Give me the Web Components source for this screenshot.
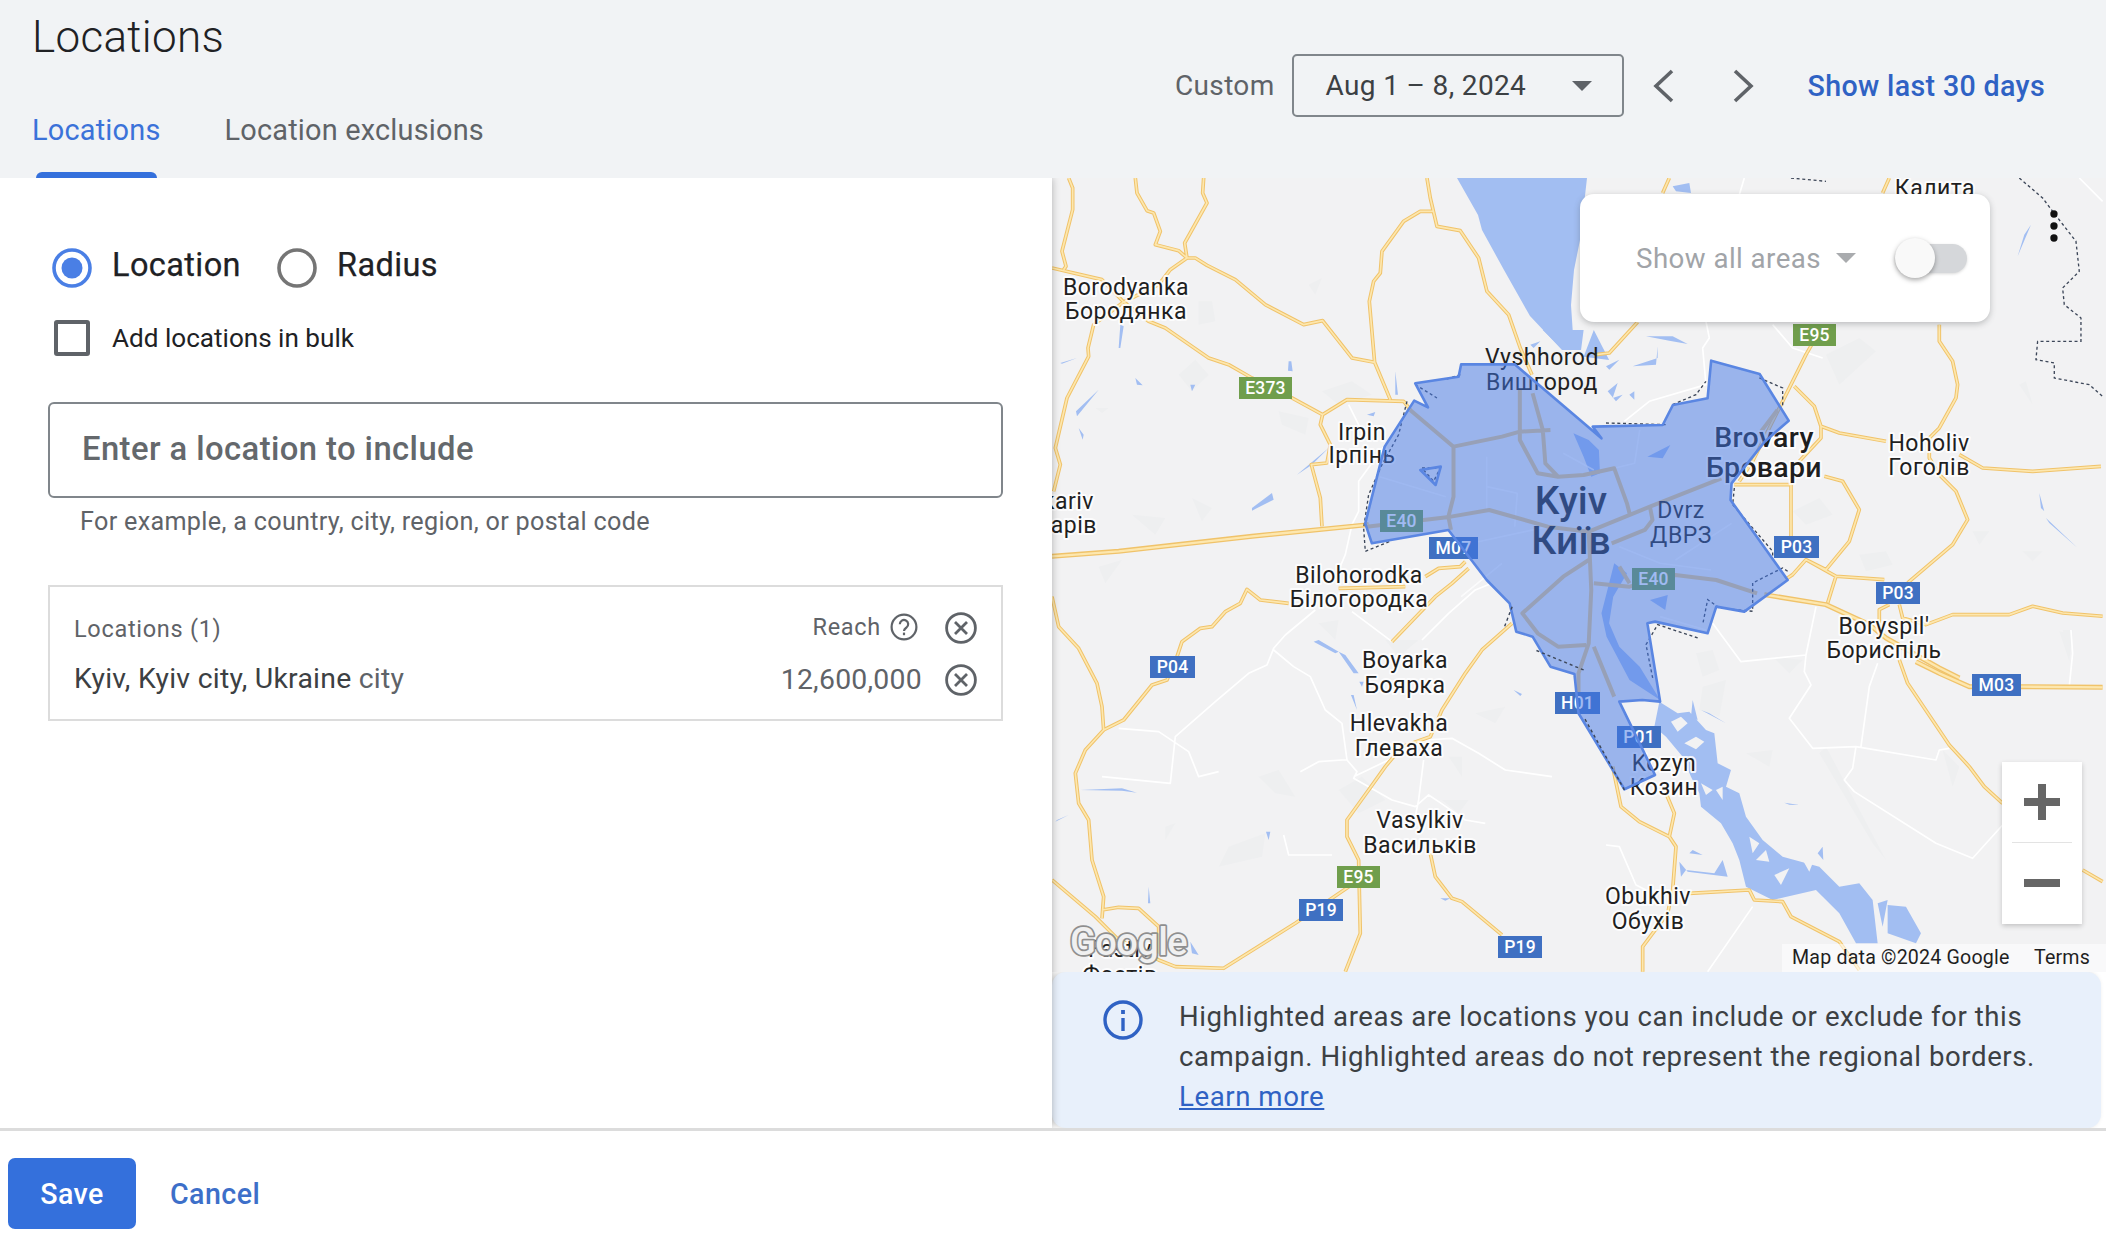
<!DOCTYPE html>
<html>
<head>
<meta charset="utf-8">
<title>Locations</title>
<style>
  html, body { margin: 0; height: 100%; background: #fff; overflow: hidden; }
  body { font-family: Roboto, "Noto Sans", sans-serif; color: #202124; }
</style>
</head>
<body>
<locations-page>
  <date-range slot="range" label="Custom" value="Aug 1 – 8, 2024" link="Show last 30 days"></date-range>
  <section slot="form">
    <radio-group></radio-group>
    <check-row>Add locations in bulk</check-row>
    <location-input placeholder="Enter a location to include" hint="For example, a country, city, region, or postal code"></location-input>
    <location-list></location-list>
  </section>
  <map-view slot="map">
    <area-card></area-card>
    <zoom-control></zoom-control>
  </map-view>
  <info-banner slot="banner">Highlighted areas are locations you can include or exclude for this<br>campaign. Highlighted areas do not represent the regional borders.<br><a>Learn more</a></info-banner>
  <action-bar slot="actions"></action-bar>
</locations-page>

<script>
'use strict';
const X_ICON = `<svg width="32" height="32" viewBox="0 0 32 32" fill="none" stroke="#5f6368" stroke-width="2.8"><circle cx="16" cy="16" r="14.4"/><path d="M10 10l12 12M22 10L10 22"/></svg>`;

class LocationsPage extends HTMLElement {
  constructor() {
    super();
    this.attachShadow({mode: 'open'}).innerHTML = `
    <style>
      :host { display: grid; width: 2106px; height: 1246px; grid-template-columns: 1052px 1054px; grid-template-rows: 178px 950px 118px; }
      header { grid-column: 1 / 3; background: #f1f3f5; display: flex; justify-content: space-between; }
      .head-left { display: flex; flex-direction: column; padding-left: 32px; }
      h1 { margin: 12px 0 0; font: 300 44px/50px Roboto, sans-serif; color: #202124; letter-spacing: .3px; }
      .tabs { display: flex; gap: 64px; margin-top: 51px; font: 400 28.9px/34px Roboto, sans-serif; color: #5f6368; position: relative; letter-spacing: .2px; }
      .tabs b { font-weight: 400; color: #3b72d9; position: relative; padding-bottom: 31px; }
      .tabs b::after { content: ''; position: absolute; left: 4px; right: 4px; bottom: 0; height: 6px; background: #3470dc; border-radius: 6px 6px 0 0; }
      .form { background: #fff; box-shadow: 0 0 8px rgba(0,0,0,.28); position: relative; z-index: 1; clip-path: inset(0 -12px 0 0); }
      .right { display: flex; flex-direction: column; background: #fff; }
      .foot { grid-column: 1 / 3; background: #fff; border-top: 3px solid #dcdcdc; }
    </style>
    <header>
      <div class="head-left">
        <h1>Locations</h1>
        <div class="tabs"><b>Locations</b><span>Location exclusions</span></div>
      </div>
      <slot name="range"></slot>
    </header>
    <div class="form"><slot name="form"></slot></div>
    <div class="right"><slot name="map"></slot><slot name="banner"></slot></div>
    <div class="foot"><slot name="actions"></slot></div>`;
  }
}
customElements.define('locations-page', LocationsPage);

class DateRange extends HTMLElement {
  constructor() {
    super();
    this.attachShadow({mode: 'open'}).innerHTML = `
    <style>
      :host { display: flex; align-items: center; height: 63px; margin: 54px 61px 0 0; font: 400 28px/34px Roboto, sans-serif; color: #5f6368; letter-spacing: .35px; }
      .select { display: flex; align-items: center; justify-content: space-between; box-sizing: border-box; width: 332px; height: 63px; margin-left: 17px; padding: 0 32px; border: 2px solid #80868b; border-radius: 5px; color: #3c4043; }
      i { width: 0; height: 0; border: 10px solid transparent; border-top: 10px solid #5f6368; border-bottom: 0; margin-right: -2px; }
      svg { display: block; }
      .nav { display: flex; gap: 59px; margin: 0 54px 0 29px; }
      a { color: #2f62c4; font-weight: 500; font-size: 28.6px; letter-spacing: .35px; }
    </style>
    <span>${this.getAttribute('label')}</span>
    <div class="select"><span>${this.getAttribute('value')}</span><i></i></div>
    <div class="nav">
      <svg width="21" height="34" viewBox="0 0 21 34" fill="none" stroke="#5f6368" stroke-width="3.6"><path d="M19 2L3 17l16 15"/></svg>
      <svg width="21" height="34" viewBox="0 0 21 34" fill="none" stroke="#5f6368" stroke-width="3.6"><path d="M2 2l16 15L2 32"/></svg>
    </div>
    <a>${this.getAttribute('link')}</a>`;
  }
}
customElements.define('date-range', DateRange);

class RadioGroup extends HTMLElement {
  constructor() {
    super();
    this.attachShadow({mode: 'open'}).innerHTML = `
    <style>
      :host { display: flex; align-items: center; height: 40px; margin: 70px 0 0 52px; font: 400 32.5px/40px Roboto, sans-serif; color: #202124; letter-spacing: .4px; }
      span { margin: -6px 0 0 20px; -webkit-text-stroke: .25px #202124; }
      svg { display: block; flex: none; }
      .second { margin-left: 36px; }
    </style>
    <svg width="40" height="40" viewBox="0 0 40 40"><circle cx="20" cy="20" r="18" fill="none" stroke="#4a7fe5" stroke-width="3.6"/><circle cx="20" cy="20" r="10.5" fill="#4a7fe5"/></svg>
    <span>Location</span>
    <svg class="second" width="40" height="40" viewBox="0 0 40 40"><circle cx="20" cy="20" r="18" fill="none" stroke="#757575" stroke-width="3.6"/></svg>
    <span>Radius</span>`;
  }
}
customElements.define('radio-group', RadioGroup);

class CheckRow extends HTMLElement {
  constructor() {
    super();
    this.attachShadow({mode: 'open'}).innerHTML = `
    <style>
      :host { display: flex; align-items: center; gap: 22px; height: 36px; margin: 32px 0 0 54px; font: 400 26.1px/36px Roboto, sans-serif; color: #202124; }
      i { display: block; box-sizing: border-box; width: 36px; height: 36px; border: 4px solid #5f6368; border-radius: 3px; }
    </style>
    <i></i><span><slot></slot></span>`;
  }
}
customElements.define('check-row', CheckRow);

class LocationInput extends HTMLElement {
  constructor() {
    super();
    this.attachShadow({mode: 'open'}).innerHTML = `
    <style>
      :host { display: block; margin: 46px 49px 0 48px; }
      .field { box-sizing: border-box; height: 96px; padding: 0 32px 2px; border: 2.5px solid #80868b; border-radius: 6px; display: flex; align-items: center; font: 500 32.8px/40px Roboto, sans-serif; color: #64686c; letter-spacing: .42px; }
      p { margin: 11px 0 0 32px; font: 400 25.2px/26px Roboto, sans-serif; color: #5f6368; letter-spacing: .3px; }
    </style>
    <div class="field">${this.getAttribute('placeholder')}</div>
    <p>${this.getAttribute('hint')}</p>`;
  }
}
customElements.define('location-input', LocationInput);

class LocationList extends HTMLElement {
  constructor() {
    super();
    this.attachShadow({mode: 'open'}).innerHTML = `
    <style>
      :host { display: block; box-sizing: border-box; height: 136px; margin: 50px 49px 0 48px; padding: 23px 24px 0 24px; border: 2.5px solid #dcdcdc; font: 400 23.5px/36px Roboto, sans-serif; color: #5f6368; letter-spacing: .7px; }
      .row { display: flex; align-items: center; justify-content: space-between; height: 36px; }
      .row + .row { margin-top: 16px; font-size: 28.4px; letter-spacing: .25px; }
      .end { display: flex; align-items: center; }
      .up { margin-top: -3px; }
      .dark { color: #3c4043; }
      .first { margin-top: 2px; }
      svg { display: block; }
      .help { margin: -2px 27px 0 9px; }
    </style>
    <div class="row">
      <span class="first">Locations (1)</span>
      <div class="end"><span class="up">Reach</span>
        <svg class="help" width="28" height="28" viewBox="0 0 28 28" fill="none" stroke="#5f6368" stroke-width="2.2"><circle cx="14" cy="14" r="12.4"/><path d="M9.8 11.2a4.2 4.2 0 1 1 6.6 3.4c-1.4 1-2.4 1.6-2.4 3.4"/><path d="M14 19.6v2.6"/></svg>
        ${X_ICON}</div>
    </div>
    <div class="row">
      <span class="up"><span class="dark">Kyiv, Kyiv city, Ukraine</span> city</span>
      <div class="end"><span style="margin-right:23px">12,600,000</span>${X_ICON}</div>
    </div>`;
  }
}
customElements.define('location-list', LocationList);

class MapView extends HTMLElement {
  constructor() {
    super();
    const label = (x, y, t, cls = '') => `<text x="${x}" y="${y}" class="${cls}">${t}</text>`;
    const shield = (x, y, w, t, c) => `<g><rect x="${x}" y="${y}" width="${w}" height="22" fill="${c}"/><text class="sh" x="${x + w / 2}" y="${y + 17}">${t}</text></g>`;
    const G = '#709e4c', B = '#3f70c2';
    this.attachShadow({mode: 'open'}).innerHTML = `
    <style>
      :host { display: block; position: relative; width: 1054px; height: 794px; flex: none; overflow: hidden; background: #f2f2f3; }
      svg { display: block; position: absolute; left: 0; top: 0; }
      text { font-family: Roboto, sans-serif; font-size: 23px; fill: #1f1f1f; text-anchor: middle; letter-spacing: .5px; paint-order: stroke; stroke: #fff; stroke-width: 4px; stroke-opacity: .85; stroke-linejoin: round; }
      text.plain { stroke: none; }
      text.end { text-anchor: end; }
      text.city { font-size: 28.5px; font-weight: 500; letter-spacing: .3px; }
      text.big { font-size: 39px; font-weight: 500; stroke: none; letter-spacing: 0; }
      text.sh { font-size: 17.5px; font-weight: 500; fill: #fff; stroke: none; letter-spacing: .2px; }
      text.small { font-size: 19.6px; text-anchor: start; stroke: none; letter-spacing: .2px; }
      text.logo { font-size: 38px; font-weight: 500; letter-spacing: -.6px; text-anchor: start; fill: #f0f0f0; stroke: #8f8f8f; stroke-width: 3.4px; stroke-opacity: 1; }
      .water { fill: #a2bef2; }
      .blob { fill: #eeeff0; }
      .minor { fill: none; stroke: #fff; stroke-width: 5; stroke-linejoin: round; }
      .a { transform: translate(1052px,178px) scale(.3333); }
      .b { transform: translate(1606px,178px) scale(.3333); }
      .c { transform: translate(1606px,560px) scale(.3333); }
      .d { transform: translate(1052px,560px) scale(.3333); }
      .e { transform: translate(1053px,330px) scale(.5102,.3333); }
      .e * { vector-effect: non-scaling-stroke; }
      .hw { fill: none; stroke: #eccb88; stroke-width: 4; stroke-linejoin: round; }
      .lite { fill: none; stroke: #fff; stroke-width: 1.6; stroke-linejoin: round; opacity: .75; }
      .dash { fill: none; stroke: #3c4658; stroke-width: 4; stroke-dasharray: 9 8; }
      .dash2 { fill: none; stroke: #3c4658; stroke-width: 1.4; stroke-dasharray: 3 3; }
      .area { fill: rgba(66,118,230,.5); stroke: #5a86e2; stroke-width: 2.6; stroke-linejoin: round; }
      .clear { fill: #f2f2f3; }
      .attr { position: absolute; bottom: 0; right: 0; height: 28px; width: 324px; background: rgba(255,255,255,.55); }
    </style>
    <svg width="1054" height="794" viewBox="1052 178 1054 794">
      <defs>
        <g id="yellow" fill="none" stroke-linejoin="round">
          <g class="a"><path d="M50,0L62,30L62,95L30,220L42,265L35,275M0,270L150,305L215,372L290,430L340,450L470,540L530,560L600,600L720,660L812,710M250,0L255,45L285,98L305,105L325,160L310,200L380,218L405,240L430,240L465,262L550,305L640,380L755,440L812,428L900,540L968,553M455,0L452,45L465,75L398,195L405,240L355,275L320,320L215,372L125,440L108,510L110,535L45,660L10,810L25,860L5,940M1125,0L1135,60L1155,145L1225,158L1280,240L1305,340L1370,410L1405,510L1440,590M1145,100L1105,100L1055,130L990,220L985,285L965,310L952,370L968,553L1015,665M812,710L885,665L1055,670L1075,695M812,710L805,740L835,800L825,855L778,860L805,960L810,1045"/></g>
          <g class="d"><path d="M0,110L20,200L80,265L135,370L150,440L155,510L100,570L70,640L80,730L110,780L120,900L155,1010L150,1075M155,510L215,480L300,375L345,360L375,290L390,245L445,205L480,200L520,155L565,130L585,88L625,120L710,130M860,85L1060,80M1120,50L1160,25L1225,20L1240,5M1020,245L1150,110L1200,70L1250,25M1380,190L1290,270L1240,340L1170,450L1135,530L1050,560L1000,620L950,690L885,780L885,830L920,900L925,1120L880,1235M0,960L130,1070L195,1135L320,1200L370,1220L515,1225L730,1090L920,960M150,1050L200,1042L260,1045L320,1100L320,1180M1135,880L1150,950L1200,1015L1230,1025L1350,1125"/></g>
          <g class="b"><path d="M850,0L830,45M190,0L170,45M95,432L10,525L-30,530M640,460L600,530L510,710L440,850L400,910M565,625L625,685L645,745L645,780L580,850M645,745L700,765L840,790M1000,440L1000,490L1040,550L1055,620L1050,660L1000,750L970,780L970,840L1000,890L1050,940L1085,1025L1040,1100L905,1215M1060,830L1130,870L1280,880L1485,865M385,920L555,920L555,1090M655,895L710,910L760,995L730,1090L660,1175L600,1145L560,1190L545,1200M600,1145L690,1195L835,1205M690,1195L665,1275M820,1380L820,1295L850,1280M880,1280L890,1320L960,1340L1040,1310L1210,1310L1280,1285L1370,1305L1490,1315"/></g>
          <g class="c"><path d="M880,300L905,370L1030,555L1090,620L1135,680L1190,730M1430,930L1490,965M20,620L45,740L100,785L190,830L210,860L200,990L185,1060L110,1160L110,1235M180,700L205,760L190,830M250,1000L430,990L445,1020L530,1025L555,1070L700,1145L760,1230"/></g>
        </g>
        <g id="motor" fill="none" stroke-linejoin="round">
          <g class="a"><path d="M0,1135L200,1120L600,1075L950,1040"/></g>
          <g class="b"><path d="M475,1250L660,1280L790,1340L840,1380L1000,1470L1060,1500"/></g>
          <g class="c"><path d="M930,305L1000,340L1090,380L1250,380L1490,382"/></g>
        </g>
      </defs>

      <!-- land patches -->
      <g class="a blob"><path d="M380,590L430,545L470,590L420,640ZM810,640L900,610L960,650L860,680ZM440,370L480,370L490,430L440,440ZM680,700L770,720L760,770L690,740ZM770,320L810,300L790,350ZM420,960L480,990L450,1030ZM240,1010L340,1020L310,1070ZM130,690L170,690L150,705Z"/></g>
      <g class="b blob"><path d="M660,530L760,480L810,520L700,620ZM1240,620L1260,610L1280,680ZM560,1000L640,960L680,1010L600,1040ZM1250,1120L1310,1120L1280,1150ZM760,1130L840,1120L860,1160L780,1180ZM1100,1060L1150,1060L1120,1100ZM1360,1360L1400,1370L1390,1450Z"/></g>
      <g class="c blob"><path d="M270,280L320,270L340,330L290,350ZM1010,570L1060,620L1040,680ZM660,560L840,900L800,850L640,580ZM420,580L500,570L490,620ZM290,380L360,360L340,470L280,450ZM1370,210L1400,210L1390,280ZM500,290L590,300L550,340Z"/></g>
      <g class="d blob"><path d="M620,650L680,630L730,710L670,700ZM530,860L640,820L630,890L500,920ZM1000,240L1100,240L1040,290ZM860,690L930,650L1000,720L920,760ZM800,190L860,180L850,240ZM1170,720L1250,720L1220,760ZM1270,460L1360,440L1330,490ZM1190,590L1230,590L1230,650ZM140,20L210,0L160,70ZM340,800L370,790L340,840Z"/></g>

      <!-- water -->
      <path class="water" d="M1457,178L1587,178L1580,240L1574,270L1571,305L1574,350L1562,350L1530,316L1504,270L1482,230L1478,215Z"/>
      <g class="a water"><path d="M600,990L660,945L665,965L600,998ZM710,550L718,550L722,580L708,578ZM250,600L272,622L255,620ZM1030,580L1038,650L1030,650ZM80,750L95,770L92,785ZM205,440L215,445L205,510L200,510ZM25,555L75,540L30,557ZM140,635L75,715L72,700ZM945,710L970,702L965,715ZM735,890L830,810L780,860ZM1435,500L1465,490L1445,510ZM415,620L430,620L420,640Z"/></g>
      <g class="b water"><path d="M1275,140L1235,235L1255,170ZM120,475L200,475L245,498L190,488ZM80,565L155,540L155,505L150,560ZM0,565L40,545L10,575ZM5,640L35,615L20,660L50,650L30,670ZM70,650L85,640L85,665ZM1300,945L1315,1000L1305,990ZM1320,1020L1415,1110L1330,1035ZM200,25L250,15L255,45L210,40Z"/></g>
      <g class="d water"><path d="M785,245L800,240L860,275L850,280ZM860,275L880,285L920,340L905,340ZM897,405L905,405L915,450ZM922,365L935,365L930,380ZM85,690L210,685L255,698L210,692ZM10,785L50,765L15,780ZM290,980L295,1030L288,1030ZM415,1145L440,1185L420,1180ZM1385,390L1410,402L1405,408ZM642,815L655,815L650,840ZM1165,1015L1195,1015L1180,1022Z"/></g>
      <g class="c water"><path d="M160,425L215,460L250,455L300,510L325,520L335,610L375,630L360,680L400,700L420,770L470,840L530,890L640,920L700,980L760,970L800,1020L815,1150L750,1150L700,1060L630,990L500,1020L420,980L400,900L380,850L345,790L285,740L280,700L255,650L230,590L180,530L145,500ZM845,1035L900,1040L945,1120L930,1150L845,1120ZM815,1030L845,1020L830,1100ZM220,905L245,935L365,950L350,900L325,940L240,930L225,950ZM250,880L290,885L260,870ZM535,728L580,735L550,734ZM260,420L275,480L255,470ZM285,450L360,490L310,460ZM635,880L650,860L652,900Z"/></g>
      <g class="c clear"><path d="M430,830L460,850L440,880ZM480,870L490,905L450,900ZM505,945L550,925L525,975ZM195,485L225,470L245,490L215,515ZM235,550L270,530L295,545L270,568ZM330,690L350,680L350,720ZM590,900L620,910L610,935ZM285,670L320,690L300,705Z"/></g>
      <g class="e water"><path d="M1020,310L1050,330L1070,360L1072,430L1055,440L1040,380ZM1100,700L1125,730L1098,800L1090,880L1110,950L1150,1010L1190,1110L1130,1050L1085,920L1075,850ZM1165,380L1210,345L1195,385ZM960,0L1040,0L1035,60L1000,60ZM1170,810L1205,795L1200,840ZM1060,0L1080,60L1090,90L1040,80Z"/></g>

      <!-- minor roads -->
      <g class="d minor"><path d="M790,150L700,225L665,265L645,315L590,340L490,425L370,530L355,670L150,650M200,505L320,515L410,575L440,650L500,635M665,270L725,320L775,350L820,450L870,490L885,600L915,635L905,655L1020,720L1090,740L1130,705L1160,725L1240,780L1300,790M745,635L800,605L870,600L885,600M905,650L1010,600L1120,540L1200,535L1280,580L1360,630L1500,650M1115,600L1100,720L1090,770M900,155L1020,245M1110,240L1190,160L1270,90L1320,70M695,825L710,885L840,885"/></g>
      <g class="c minor"><path d="M320,190L405,305L600,285L595,335L615,375L550,475L620,565L750,560L990,600L1000,570L1030,565M630,140L600,285M815,310L790,380L765,560M750,560L740,625L715,660L745,695L990,850L1100,895L1190,795M1395,210L1400,280L1390,380M440,1040L305,1235M0,855L40,860L90,975L120,990"/></g>
      <g class="b minor"><path d="M1420,0L1490,70M500,440L560,510L650,540M300,430L310,480L290,510L300,620L130,670L55,730M415,0L400,50"/></g>
      <g class="a minor"><path d="M890,680L930,760M1000,800L920,910L920,1000L900,1040L880,1130L850,1200"/></g>

      <!-- main roads -->
      <use href="#yellow" stroke="#f0c36a" stroke-width="11"/>
      <use href="#yellow" stroke="#fde7ae" stroke-width="5"/>
      <use href="#motor" stroke="#f0c36a" stroke-width="15"/>
      <use href="#motor" stroke="#fde7ae" stroke-width="7"/>

      <!-- highways through the city -->
      <g class="e">
        <path class="lite" d="M850,380L850,540M640,440L770,500M850,470L910,490L905,590M820,640L970,590M1000,370L1060,420M1150,300L1140,400L1100,415M1330,580L1220,690M880,700L800,800M1190,860L1280,900M1110,650L1190,700L1290,720"/>
        <path class="hw" d="M700,240L785,350L785,500L775,560L780,600M785,350L880,320L915,305L975,300M915,180L915,330L950,430L990,440L1040,435L1100,415L1125,520L1130,550M940,190L960,300L965,400L990,440M615,590L780,560L855,540L970,590L1050,605L1170,530L1310,445M1420,240L1380,320M1170,530L1175,570L1160,600L1095,640M1050,605L1055,780L1050,940L1030,1030L1030,1150M1060,760L1130,770L1220,735L1300,750L1380,790M1110,710L1130,760M1050,690L1000,740L920,850L950,910L990,950L1045,945M1060,950L1100,1100"/>
      </g>

      <!-- labels -->
      <g>
        ${label(1126,295,'Borodyanka')}${label(1126,319,'Бородянка')}
        ${label(1362,440,'Irpin')}${label(1362,463,'Ірпінь')}
        ${label(1094,509,'kariv','end')}${label(1097,533,'арів','end')}
        ${label(1359,583,'Bilohorodka')}${label(1359,607,'Білогородка')}
        ${label(1405,668,'Boyarka')}${label(1405,693,'Боярка')}
        ${label(1399,731,'Hlevakha')}${label(1399,756,'Глеваха')}
        ${label(1420,828,'Vasylkiv')}${label(1420,853,'Васильків')}
        ${label(1120,957,'Fastiv')}${label(1120,983,'Фастів')}
        ${label(1542,365,'Vyshhorod','plain')}${label(1542,390,'Вишгород','plain')}
        ${label(1764,447,'Brovary','city')}${label(1764,477,'Бровари','city')}
        ${label(1929,451,'Hoholiv')}${label(1929,475,'Гоголів')}
        ${label(1884,634,'Boryspil\'')}${label(1884,658,'Бориспіль')}
        ${label(1935,196,'Калита')}
        ${label(1571,514,'Kyiv','big')}${label(1571,554,'Київ','big')}
        ${label(1681,518,'Dvrz','plain')}${label(1681,543,'ДВРЗ','plain')}
        ${label(1664,771,'Kozyn')}${label(1664,795,'Козин')}
        ${label(1648,904,'Obukhiv')}${label(1648,929,'Обухів')}
      </g>

      <!-- road shields -->
      ${shield(1239,377,53,'E373',G)}${shield(1793,324,43,'E95',G)}${shield(1774,536,45,'P03',B)}
      ${shield(1876,582,44,'P03',B)}${shield(1972,674,49,'M03',B)}${shield(1617,726,44,'P01',B)}
      ${shield(1632,568,43,'E40',G)}${shield(1380,510,43,'E40',G)}${shield(1429,537,49,'M07',B)}
      ${shield(1555,692,45,'H01',B)}${shield(1150,656,45,'P04',B)}${shield(1337,866,43,'E95',G)}
      ${shield(1299,899,44,'P19',B)}${shield(1498,936,44,'P19',B)}

      <!-- regional border, dotted -->
      <g class="b"><path class="dash" d="M555,0L660,10M1240,0L1310,60L1340,100L1410,190L1420,280L1370,330L1375,380L1425,420L1425,490L1295,490L1290,545L1345,555L1345,600L1450,620L1490,655M0,735L180,740M200,680L270,650L300,610M460,600L530,630L530,690M385,930L380,980L500,1120L500,1140M545,1180L530,1170L440,1215L440,1300L340,1290L305,1265L290,1340M275,1380L155,1340L120,1400L140,1500"/></g>
      <g class="a"><path class="dash" d="M1090,620L1155,660M1225,590L1180,605M1065,670L1040,770L990,860L950,950L935,1050L940,1120L1015,1090M1110,870L1165,870L1145,910Z"/></g>
      <g class="b" fill="#111"><circle cx="1344" cy="108" r="11"/><circle cx="1344" cy="144" r="11"/><circle cx="1344" cy="180" r="11"/></g>

      <!-- the selected area -->
      <g class="e">
        <path class="area" d="M1290,92L1385,132L1442,272L1395,335L1330,460L1328,510L1440,750L1355,845L1300,830L1283,910L1180,875L1165,880L1190,1115L1155,1110L1110,1115L1180,1335L1120,1378L1030,1150L1022,1032L975,1010L940,920L908,905L895,820L850,750L775,600L625,640L612,580L650,350L708,212L735,232L710,160L795,140L800,103L905,103L1075,325L1058,290L1195,285L1215,225L1283,205Z"/>
        <path class="area" style="fill:none" d="M720,420L760,410L750,465Z"/>
        <path class="dash2" d="M1120,1380L1040,1160M900,830L885,890M1040,1020L945,960"/>
      </g>

      <text class="logo" x="1070" y="955">Google</text>
    </svg>
    <div class="attr"></div>
    <svg width="1054" height="794" viewBox="1052 178 1054 794" style="pointer-events:none">
      <text class="small" x="1792" y="964">Map data ©2024 Google</text>
      <text class="small" x="2034" y="964">Terms</text>
    </svg>
    <slot></slot>`;
  }
}
customElements.define('map-view', MapView);

class AreaCard extends HTMLElement {
  constructor() {
    super();
    this.attachShadow({mode: 'open'}).innerHTML = `
    <style>
      :host { position: absolute; left: 528px; top: 16px; width: 410px; height: 128px; box-sizing: border-box; display: flex; align-items: center; padding-left: 56px; background: #fff; border-radius: 14px; box-shadow: 0 2px 6px rgba(60,64,67,.3); font: 400 27.7px/34px Roboto, sans-serif; color: #a1a4a8; letter-spacing: .45px; }
      span { margin-top: 2px; }
      i { width: 0; height: 0; border: 10px solid transparent; border-top: 10px solid #a9abae; border-bottom: 0; margin-left: 15px; }
      .toggle { position: relative; width: 72px; height: 29px; margin-left: 39px; border-radius: 15px; background: #d5d7da; box-shadow: 0 1px 3px rgba(0,0,0,.15); }
      .toggle::after { content: ''; position: absolute; left: 0; top: -6px; width: 40px; height: 40px; border-radius: 50%; background: #f9f9f9; box-shadow: 0 2px 5px rgba(0,0,0,.35); }
    </style>
    <span>Show all areas</span><i></i><div class="toggle"></div>`;
  }
}
customElements.define('area-card', AreaCard);

class ZoomControl extends HTMLElement {
  constructor() {
    super();
    this.attachShadow({mode: 'open'}).innerHTML = `
    <style>
      :host { position: absolute; right: 24px; bottom: 48px; width: 80px; height: 162px; display: flex; flex-direction: column; align-items: center; background: #fff; box-shadow: 0 2px 5px rgba(0,0,0,.2); }
      svg { display: block; }
      hr { width: 60px; margin: 0; border: 0; border-top: 1.5px solid #e3e3e3; }
      .plus { margin: 22px 0 22px; }
      .minus { margin: 22px 0 0; }
    </style>
    <svg class="plus" width="36" height="36" viewBox="0 0 36 36" fill="#666"><path d="M14 0h8v14h14v8H22v14h-8V22H0v-8h14z"/></svg>
    <hr>
    <svg class="minus" width="36" height="36" viewBox="0 0 36 36" fill="#666"><path d="M0 14h36v8H0z"/></svg>`;
  }
}
customElements.define('zoom-control', ZoomControl);

class InfoBanner extends HTMLElement {
  constructor() {
    super();
    this.attachShadow({mode: 'open'}).innerHTML = `
    <style>
      :host { display: flex; box-sizing: border-box; height: 156px; margin-right: 5px; padding: 25px 0 0 51px; background: #e8f0fb; border-radius: 14px; box-shadow: -2px 0 5px rgba(0,0,0,.15); font: 400 27.6px/40px Roboto, sans-serif; color: #3c4043; letter-spacing: .57px; }
      svg { display: block; flex: none; margin: 3px 36px 0 0; }
      ::slotted(a) { color: #2f62c4; text-decoration: underline; }
    </style>
    <svg width="40" height="40" viewBox="0 0 40 40" fill="none" stroke="#2f62c4" stroke-width="3.4"><circle cx="20" cy="20" r="18"/><path d="M20 18v13"/><path d="M20 10v4" stroke-width="3.8"/></svg>
    <div><slot></slot></div>`;
  }
}
customElements.define('info-banner', InfoBanner);

class ActionBar extends HTMLElement {
  constructor() {
    super();
    this.attachShadow({mode: 'open'}).innerHTML = `
    <style>
      :host { display: flex; align-items: center; padding: 27px 0 0 8px; font: 500 28.6px/36px Roboto, sans-serif; letter-spacing: .45px; }
      .save { display: flex; align-items: center; justify-content: center; width: 128px; height: 71px; background: #3470dc; color: #fff; border-radius: 7px; }
      .cancel { margin-left: 34px; color: #3d6fc9; }
    </style>
    <div class="save">Save</div><span class="cancel">Cancel</span>`;
  }
}
customElements.define('action-bar', ActionBar);
</script>
</body>
</html>
